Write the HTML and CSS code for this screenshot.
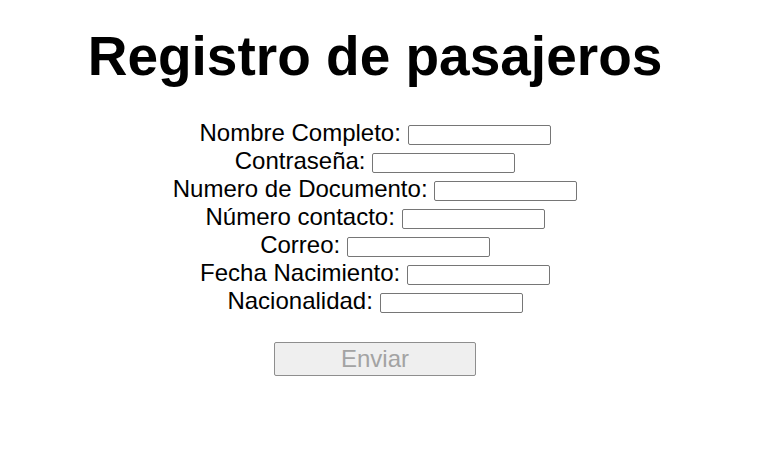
FILE: index.html
```html
<!DOCTYPE html>
<html lang="es">
<head>
<meta charset="utf-8">
<title>Registro de pasajeros</title>
<link rel="stylesheet" href="styles.css">
</head>
<body>
<main class="page">
  <h1 class="title">Registro de pasajeros</h1>
  <form class="form">
    <div class="row"><label>Nombre Completo: <input class="field" type="text"></label></div>
    <div class="row"><label>Contraseña: <input class="field" type="password"></label></div>
    <div class="row"><label>Numero de Documento: <input class="field" type="text"></label></div>
    <div class="row"><label>Número contacto: <input class="field" type="text"></label></div>
    <div class="row"><label>Correo: <input class="field" type="text"></label></div>
    <div class="row"><label>Fecha Nacimiento: <input class="field" type="text"></label></div>
    <div class="row"><label>Nacionalidad: <input class="field" type="text"></label></div>
    <div class="actions"><button class="submit" type="submit" disabled>Enviar</button></div>
  </form>
</main>
</body>
</html>
```
FILE: styles.css
```css
html, body {
  margin: 0;
  padding: 0;
  background: #ffffff;
}
body {
  font-family: "Liberation Sans", Arial, sans-serif;
  color: #000000;
}
.page {
  width: 734px;
  margin-left: 8px;
  text-align: center;
}
.title {
  margin: 24px 0 0 0;
  font-size: 55px;
  font-weight: bold;
  line-height: normal;
}
.form {
  margin-top: 31px;
}
.row {
  font-size: 24px;
  line-height: 28px;
}
.field {
  box-sizing: border-box;
  width: 143px;
  height: 20px;
  margin: 0;
  padding: 0 3px;
  border: 1px solid #767676;
  border-radius: 2px;
  background: #ffffff;
  vertical-align: middle;
  font-size: 13px;
}
.actions {
  margin-top: 27px;
}
.submit {
  box-sizing: border-box;
  width: 202px;
  height: 34px;
  margin: 0;
  padding: 0;
  border: 1px solid #8e8e8e;
  border-radius: 2px;
  background: #efefef;
  color: #a3a3a3;
  font-family: "Liberation Sans", Arial, sans-serif;
  font-size: 24px;
  line-height: 32px;
}
```
